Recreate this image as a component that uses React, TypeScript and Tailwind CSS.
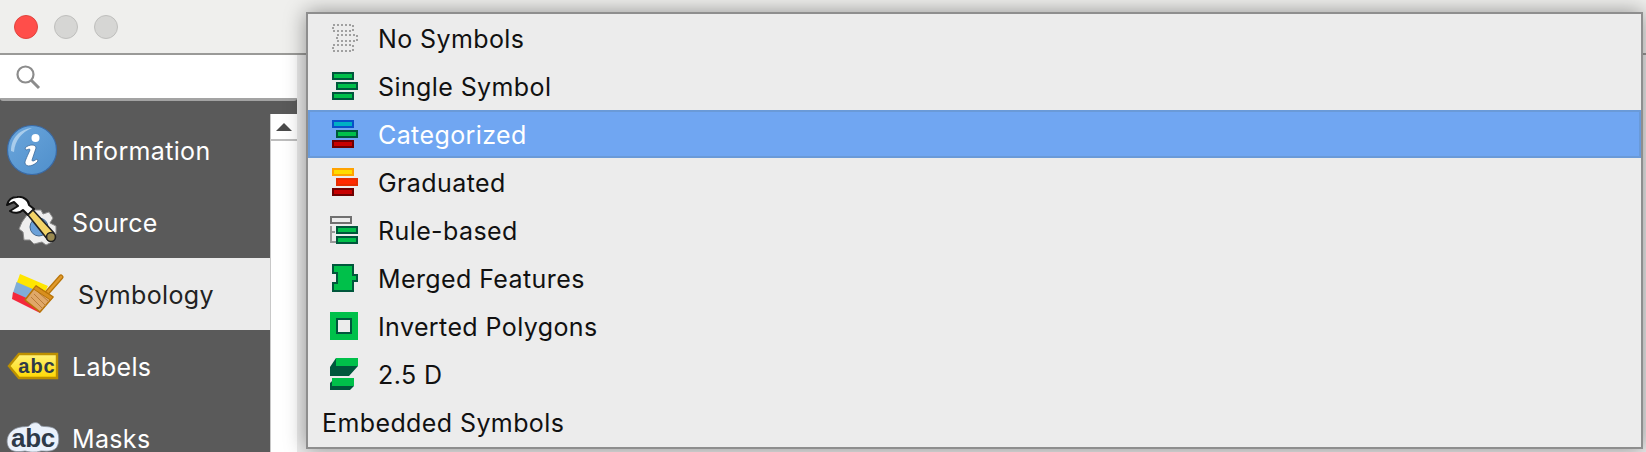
const sans = "[font-family:Inter,sans-serif]";

function Bar({ x, y, stroke, fill }: { x: number; y: number; stroke: string; fill: string }) {
  return <rect x={x + 1} y={y + 1} width="20" height="6" fill={fill} stroke={stroke} strokeWidth="2" />;
}

const GREEN = "#00c04a";
const DARK = "#00573c";

function NoSymbolsIcon() {
  return (
    <svg width="32" height="32" viewBox="0 0 32 32" fill="none" stroke="#a0a0a0" strokeWidth="2" strokeDasharray="2 2">
      <rect x="3" y="3" width="20" height="6" />
      <rect x="7" y="13" width="20" height="6" />
      <rect x="3" y="23" width="20" height="6" />
    </svg>
  );
}

function StackIcon({ colors }: { colors: [string, string][] }) {
  return (
    <svg width="32" height="32" viewBox="0 0 32 32">
      <Bar x={2} y={2} stroke={colors[0][0]} fill={colors[0][1]} />
      <Bar x={6} y={12} stroke={colors[1][0]} fill={colors[1][1]} />
      <Bar x={2} y={22} stroke={colors[2][0]} fill={colors[2][1]} />
    </svg>
  );
}

function RuleIcon() {
  return (
    <svg width="32" height="32" viewBox="0 0 32 32">
      <rect x="1" y="3" width="20" height="6" fill="#ececec" stroke="#707070" strokeWidth="2" />
      <path d="M1 12v16h5M1 18h4" fill="none" stroke="#9a9a9a" strokeWidth="2" />
      <Bar x={6} y={12} stroke={DARK} fill={GREEN} />
      <Bar x={6} y={22} stroke={DARK} fill={GREEN} />
    </svg>
  );
}

function MergedIcon() {
  return (
    <svg width="32" height="32" viewBox="0 0 32 32">
      <path d="M3 3H23V13H27V19H23V29H3V21H7V11H3Z" fill={GREEN} stroke={DARK} strokeWidth="2" />
    </svg>
  );
}

function InvertedIcon() {
  return (
    <svg width="32" height="32" viewBox="0 0 32 32">
      <rect x="0" y="2" width="28" height="28" fill={GREEN} />
      <rect x="7" y="9" width="14" height="14" fill="#ececec" stroke={DARK} strokeWidth="2" />
    </svg>
  );
}

function TwoFiveIcon() {
  return (
    <svg width="32" height="32" viewBox="0 0 32 32">
      <path d="M6 0L0 9V18H19L28 8H6Z" fill={DARK} />
      <rect x="6" y="0" width="22" height="8" fill={GREEN} />
      <path d="M5 20L0 25V32H20L24 28H5Z" fill={DARK} />
      <rect x="2" y="20" width="22" height="8" fill={GREEN} />
    </svg>
  );
}

function InfoIcon() {
  return (
    <svg width="52" height="52" viewBox="0 0 52 52">
      <defs>
        <linearGradient id="infoBlue" x1="0" y1="0" x2="1" y2="1">
          <stop offset="0" stopColor="#6ba6dc" />
          <stop offset="1" stopColor="#4f8fcb" />
        </linearGradient>
      </defs>
      <circle cx="26" cy="26" r="24.5" fill="url(#infoBlue)" stroke="#3a6aa5" strokeWidth="1.2" />
      <path d="M5 27C5 14 14 5 26 4C16 8 9 16 8 28Z" fill="#a9cdec" />
      <circle cx="29.5" cy="14" r="4" fill="#fff" />
      <path d="M19 24C23 20 30 20 30 24L26 36C26 38 28 37 31 35L32 37C28 42 20 44 19 39C19 37 20 35 24 26C24 24 21 26 20 26Z" fill="#fff" stroke="#33608f" strokeWidth="0.7" />
    </svg>
  );
}

function SourceIcon() {
  return (
    <svg width="52" height="52" viewBox="0 0 52 52">
      <path d="M21 19L25 14H35L37 18L43 16L47 22L44 27L50 30V38L45 40L46 46L40 49L36 46L28 48L24 44L18 44L17 36L13 33L16 26Z" fill="#eeeeee" stroke="#8a8a8a" strokeWidth="1" />
      <circle cx="33" cy="31" r="9" fill="#6aa0d8" stroke="#44668a" strokeWidth="1" />
      <path d="M11 1C5 1 2 5 1 9L8 6L12 10L4 15C8 18 14 17 17 14L22 19L28 13L23 9C23 5 18 0 11 1Z" fill="#fff" stroke="#111" strokeWidth="2" strokeLinejoin="round" />
      <path d="M22 19L27 14L48 37L42 44Z" fill="#f3d468" stroke="#222" strokeWidth="1.6" strokeLinejoin="round" />
      <circle cx="45" cy="41" r="4.5" fill="#9a8a50" stroke="#222" strokeWidth="1.6" />
    </svg>
  );
}

function SymbologyIcon() {
  return (
    <svg width="52" height="42" viewBox="0 0 52 42">
      <path d="M8 1L36 13L30 24L4 12Z" fill="#ffe600" />
      <path d="M4.5 9L30 20L24 32L1 20Z" fill="#7fadd8" />
      <path d="M1 19L28 31L28 40L0 26Z" fill="#f4283c" />
      <path d="M34 21L49 4" stroke="#b87408" strokeWidth="5" strokeLinecap="round" />
      <path d="M34 21L49 4" stroke="#e09a2c" strokeWidth="2.6" strokeLinecap="round" />
      <path d="M24 13L41 24L28 39L13 27Z" fill="#e0a868" stroke="#b87408" strokeWidth="1.6" strokeLinejoin="round" />
      <path d="M19 24L31 36M22 21L34 33M25 18L37 29" stroke="#b87b3a" strokeWidth="1" />
      <path d="M24 13L41 24L38.5 27L21.5 16Z" fill="#d98f1e" stroke="#b87408" strokeWidth="1" />
    </svg>
  );
}

function LabelsIcon() {
  return (
    <svg width="52" height="28" viewBox="0 0 52 28">
      <defs>
        <linearGradient id="tagFill" x1="0" y1="0" x2="0" y2="1">
          <stop offset="0" stopColor="#fff27a" />
          <stop offset="1" stopColor="#ffd800" />
        </linearGradient>
      </defs>
      <path d="M2 14L12 2H50V26H12Z" fill="url(#tagFill)" stroke="#bd9000" strokeWidth="2.4" />
      <text x="30" y="21" textAnchor="middle" fontFamily="Liberation Sans" fontWeight="700" fontSize="20" fill="#2e3a48" letterSpacing="1">abc</text>
    </svg>
  );
}

function MasksIcon() {
  return (
    <svg width="56" height="32" viewBox="0 0 56 32">
      <path d="M12 6C18 4 22 5 24 4C28 -1 34 0 36 4C40 5 46 4 50 7C55 10 55 24 50 27C46 30 40 29 36 29C30 31 24 30 20 29C14 30 8 30 5 27C0 22 1 10 12 6Z" fill="#eaf1fb" stroke="#8a93a0" strokeWidth="0.8" />
      <text x="28" y="25" textAnchor="middle" fontFamily="Liberation Sans" fontWeight="700" fontSize="26" fill="#2e3a48" letterSpacing="-0.3">abc</text>
    </svg>
  );
}

const navItems = [
  { label: "Information", icon: <InfoIcon />, left: "pl-[6px]" },
  { label: "Source", icon: <SourceIcon />, left: "pl-[6px]" },
  { label: "Symbology", icon: <SymbologyIcon />, left: "pl-[12px]", active: true },
  { label: "Labels", icon: <LabelsIcon />, left: "pl-[7px]" },
  { label: "Masks", icon: <MasksIcon />, left: "pl-[5px]" },
];

const RED: [string, string] = ["#6e0000", "#c80000"];
const G: [string, string] = [DARK, GREEN];

const rows = [
  { label: "No Symbols", icon: <NoSymbolsIcon /> },
  { label: "Single Symbol", icon: <StackIcon colors={[G, G, G]} /> },
  { label: "Categorized", icon: <StackIcon colors={[["#0a50c8", "#00b0c4"], G, RED]} />, selected: true },
  { label: "Graduated", icon: <StackIcon colors={[["#ffa200", "#ffdc00"], ["#e62e00", "#ff2a00"], RED]} /> },
  { label: "Rule-based", icon: <RuleIcon /> },
  { label: "Merged Features", icon: <MergedIcon /> },
  { label: "Inverted Polygons", icon: <InvertedIcon /> },
  { label: "2.5 D", icon: <TwoFiveIcon /> },
];

export default function App() {
  return (
    <div className={`relative w-[1646px] h-[452px] overflow-hidden bg-[#ececec] ${sans}`}>
      <div className="flex items-center gap-[16px] h-[55px] pl-[14px] bg-[#efefed] border-b-2 border-[#9a9a98]">
        <span className="w-[24px] h-[24px] rounded-full bg-[#ff4e4a] border border-[#e0443e]" />
        <span className="w-[24px] h-[24px] rounded-full bg-[#d6d6d4] border border-[#bfbfbd]" />
        <span className="w-[24px] h-[24px] rounded-full bg-[#d6d6d4] border border-[#bfbfbd]" />
      </div>

      <div className="w-[297px] h-[397px] flex flex-col bg-[#5a5a5a]">
        <div className="flex items-center shrink-0 w-[297px] h-[46px] pl-[15px] bg-white rounded-b-[3px] border-b-[3px] border-[#a3a3a3]">
          <svg width="26" height="26" viewBox="0 0 26 26" fill="none" stroke="#8c8c8c">
            <circle cx="10.5" cy="10.5" r="8" strokeWidth="2.2" />
            <path d="M16.5 16.5L24 24" strokeWidth="3" />
          </svg>
        </div>
        <div className="flex flex-1 min-h-0 pt-[13px]">
          <div className="w-[270px] flex flex-col">
            {navItems.map((item) => (
              <div
                key={item.label}
                className={`relative flex items-center shrink-0 h-[72px] text-[25px] tracking-[0.35px] ${item.left} ${
                  item.active ? "bg-[#ebebeb] text-[#222222]" : "text-white"
                }`}
              >
                {item.icon}
                <span className={`absolute top-0 h-full pt-[3px] flex items-center ${item.active ? "left-[78px]" : "left-[72px]"}`}>
                  {item.label}
                </span>
              </div>
            ))}
          </div>
          <div className="w-[27px] bg-white border-l border-[#c8c8c8]">
            <div className="flex items-center justify-center h-[27px] border-b-2 border-[#bdbdbd]">
              <span className="w-0 h-0 border-x-[8px] border-x-transparent border-b-[8px] border-b-[#4a4a4a]" />
            </div>
          </div>
        </div>
      </div>

      <div className="absolute left-[306px] top-[12px] w-[1337px] h-[437px] bg-[#ececec] border-2 border-[#8e8e8e] shadow-[0_0_20px_rgba(0,0,0,0.4)] text-[25px] tracking-[0.4px] text-[#111111]">
        {rows.map((row) => (
          <div
            key={row.label}
            className={`flex items-center h-[48px] ${
              row.selected ? "bg-[#70a6f2] border-2 border-[#6a9ad8] text-white pl-[20px]" : "pl-[22px]"
            }`}
          >
            {row.icon}
            <span className="ml-[16px] pt-[4px]">{row.label}</span>
          </div>
        ))}
        <div className="flex items-center h-[48px] pl-[14px] pt-[4px]">Embedded Symbols</div>
      </div>
    </div>
  );
}
